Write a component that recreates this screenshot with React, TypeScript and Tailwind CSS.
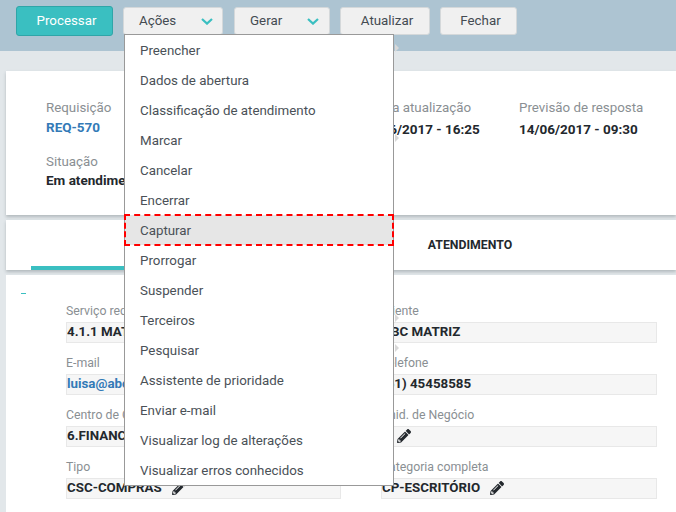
import React from "react";
import { FaPencilAlt } from "react-icons/fa";

const menu = ["Preencher","Dados de abertura","Classificação de atendimento","Marcar","Cancelar","Encerrar","Capturar","Prorrogar","Suspender","Terceiros","Pesquisar","Assistente de prioridade","Enviar e-mail","Visualizar log de alterações","Visualizar erros conhecidos"];
const arrows = ["Preencher","Marcar","Terceiros","Pesquisar"];

function Chevron() {
  return (
    <svg width="12" height="7" viewBox="0 0 12 7" className="shrink-0">
      <polyline points="1,1 6,5.6 11,1" fill="none" stroke="#3abfc1" strokeWidth="2.2" />
    </svg>
  );
}

function Btn({ label, w, chevron, cls }: { label: string; w: string; chevron?: boolean; cls?: string }) {
  return (
    <div className={`${w} ${cls ?? ""} mt-[1px] h-[28px] flex items-center rounded-[3px] border border-[#d4d8da] bg-[#f0f0f0] text-[13.33px] text-[#444b52] ${chevron ? "justify-between" : "justify-center"}`}>
      <span>{label}</span>
      {chevron && <Chevron />}
    </div>
  );
}

function Field({ label, value, pencil, link }: { label: string; value: string; pencil?: boolean; link?: boolean }) {
  return (
    <div className="h-[52px] flex flex-col">
      <div className="h-[21px] pt-[1px] text-[12.3px] leading-[18px] text-[#8a8f93]">{label}</div>
      <div className="h-[21px] pb-[1px] flex items-center gap-[10px] bg-[#f6f6f6] border border-[#e8e8e8] text-[13.33px] font-bold text-[#23282d] whitespace-nowrap overflow-hidden">
        <span className={link ? "text-[#337ab7]" : ""}>{value}</span>
        {pencil && <FaPencilAlt className="text-[#23282d] text-[14px] shrink-0" />}
      </div>
    </div>
  );
}

function Info({ label, value, w, link, vm }: { label: string; value: string; w: string; link?: boolean; vm: string }) {
  return (
    <div className={w}>
      <div className="text-[13.33px] leading-[18px] text-[#8a8f93]">{label}</div>
      <div className={`${vm} text-[13.5px] leading-[18px] font-bold whitespace-nowrap ${link ? "text-[#337ab7]" : "text-[#23282d]"}`}>{value}</div>
    </div>
  );
}

export default function App() {
  return (
    <div className="relative w-[676px] h-[512px] overflow-hidden bg-[#e2e7ea] font-['Roboto',sans-serif]">
      <div className="h-[51px] bg-[#adc4d2] pl-[16px] pt-[6px] flex items-start gap-[10px]">
        <div className="w-[97px] h-[30px] pl-[4px] flex items-center justify-center rounded-[3px] border border-[#2fa5a8] bg-[#3abfc1] text-[13.33px] text-white">Processar</div>
        <Btn label="Ações" w="w-[100px]" cls="pl-[15px] pr-[9px]" chevron />
        <Btn label="Gerar" w="w-[96px]" cls="ml-[1px] pl-[15px] pr-[10px]" chevron />
        <Btn label="Atualizar" w="w-[90px]" cls="pl-[4px]" />
        <Btn label="Fechar" w="w-[77px]" cls="pl-[4px]" />
      </div>

      <div className="ml-[6px] mt-[20px] h-[144px] bg-white shadow-[0_2px_3px_rgba(120,130,135,0.45)] pl-[40px] pt-[28px]">
        <div className="flex">
          <Info label="Requisição" value="REQ-570" w="w-[315px]" vm="mt-[1px]" link />
          <Info label="Última atualização" value="13/06/2017 - 16:25" w="w-[158px]" vm="mt-[3px]" />
          <Info label="Previsão de resposta" value="14/06/2017 - 09:30" w="w-[150px]" vm="mt-[3px]" />
        </div>
        <div className="mt-[15px]">
          <Info label="Situação" value="Em atendimento" w="w-[150px]" vm="mt-0" />
        </div>
      </div>

      <div className="ml-[6px] mt-[5px] h-[50px] bg-white shadow-[0_2px_3px_rgba(120,130,135,0.45)] flex pl-[25px]">
        <div className="w-[315px] h-full flex flex-col justify-end">
          <div className="h-[4px] bg-[#3abfc1]" />
        </div>
        <div className="w-[248px] h-full flex items-center justify-center text-[12.3px] font-bold text-[#23282d]">ATENDIMENTO</div>
      </div>

      <div className="ml-[6px] mt-[5px] h-[237px] bg-white pl-[60px] pt-[26px] relative">
        <div className="absolute left-[15px] top-[18px] w-[5px] h-[1px] bg-[#3abfc1]" />
        <div className="grid grid-cols-[275px_276px] gap-x-[40px]">
          <div>
            <Field label="Serviço requisitado" value="4.1.1 MATERIAL" />
            <Field label="E-mail" value="luisa@abc.com.br" link />
            <Field label="Centro de Custo" value="6.FINANCEIRO" />
            <Field label="Tipo" value="CSC-COMPRAS" pencil />
          </div>
          <div>
            <Field label="Cliente" value="ABC MATRIZ" />
            <Field label="Telefone" value="(51) 45458585" />
            <Field label="Unid. de Negócio" value="-" pencil />
            <Field label="Categoria completa" value="CP-ESCRITÓRIO" pencil />
          </div>
        </div>
      </div>

      <div className="absolute left-[124px] top-[34px] w-[270px] h-[452px] bg-white border border-[#999]">
        {menu.map((m) => (
          <div key={m} className={`relative h-[30px] pl-[15px] pt-[2px] flex items-center text-[13.33px] text-[#4a5157] ${m === "Capturar" ? "bg-[#e6e6e6] outline-2 outline-dashed outline-[#f00] -outline-offset-1" : ""}`}>
            {m}
            {arrows.includes(m) && (
              <span className="absolute left-[270px] top-[9px] w-0 h-0 border-y-[4px] border-y-transparent border-l-[4px] border-l-[#d8d8d8]" />
            )}
          </div>
        ))}
      </div>
    </div>
  );
}
